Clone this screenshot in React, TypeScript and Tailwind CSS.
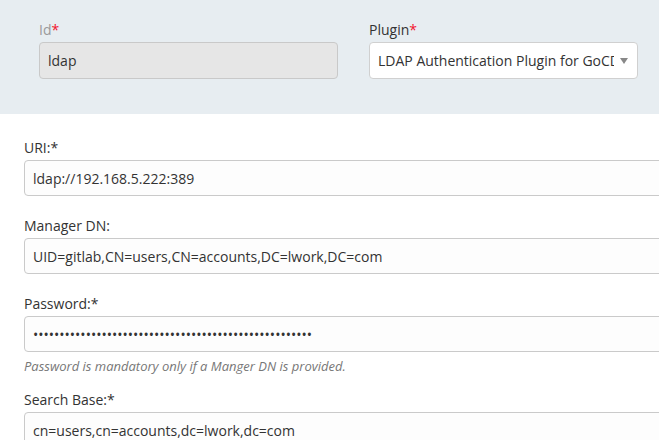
import React from "react";

const font = { fontFamily: '"Open Sans", "Noto Sans", sans-serif' };

function Field({
  label,
  value,
  type = "text",
}: {
  label: string;
  value: string;
  type?: string;
}) {
  return (
    <div className="flex flex-col">
      <label className="text-[14px] leading-[20px] text-[#333] mb-[2px]">{label}</label>
      <input
        readOnly
        type={type}
        value={value}
        className="h-[36px] w-[700px] rounded-[4px] border border-[#cacaca] bg-[#fdfdfd] px-[8px] text-[14px] text-[#333] outline-none"
        style={font}
      />
    </div>
  );
}

export default function App() {
  return (
    <div className="w-[659px] h-[440px] overflow-hidden bg-white" style={font}>
      <div className="bg-[#e7edf1] h-[114px] pt-[20px] pl-[39px] flex gap-[31px]">
        <div className="flex flex-col w-[299px]">
          <div className="text-[14px] leading-[20px] text-[#9a9a9a] mb-[2px]">
            Id<span className="text-[#f2132c]">*</span>
          </div>
          <div className="h-[37px] rounded-[4px] border border-[#c9c9c9] bg-[#e6e6e6] flex items-center px-[8px] text-[14px] text-[#333]">
            ldap
          </div>
        </div>
        <div className="flex flex-col w-[269px]">
          <div className="text-[14px] leading-[20px] text-[#333] mb-[2px]">
            Plugin<span className="text-[#f2132c]">*</span>
          </div>
          <div className="h-[37px] rounded-[4px] border border-[#d0d0d0] bg-white flex items-center pl-[8px] pr-[9px] text-[14px] text-[#333]">
            <span className="flex-1 overflow-hidden whitespace-nowrap">LDAP Authentication Plugin for GoCD</span>
            <svg width="8" height="6" viewBox="0 0 8 6" className="ml-[6px] shrink-0">
              <path d="M0 0 H8 L4 6 Z" fill="#888" />
            </svg>
          </div>
        </div>
      </div>
      <div className="pl-[24px] pt-[24px] flex flex-col">
        <Field label="URI:*" value="ldap://192.168.5.222:389" />
        <div className="h-[20px]" />
        <Field label="Manager DN:" value="UID=gitlab,CN=users,CN=accounts,DC=lwork,DC=com" />
        <div className="h-[20px]" />
        <Field label="Password:*" type="password" value={"x".repeat(53)} />
        <div className="text-[13px] italic text-[#777] leading-[16px] mt-[6px]">
          Password is mandatory only if a Manger DN is provided.
        </div>
        <div className="h-[16px]" />
        <Field label="Search Base:*" value="cn=users,cn=accounts,dc=lwork,dc=com" />
      </div>
    </div>
  );
}
